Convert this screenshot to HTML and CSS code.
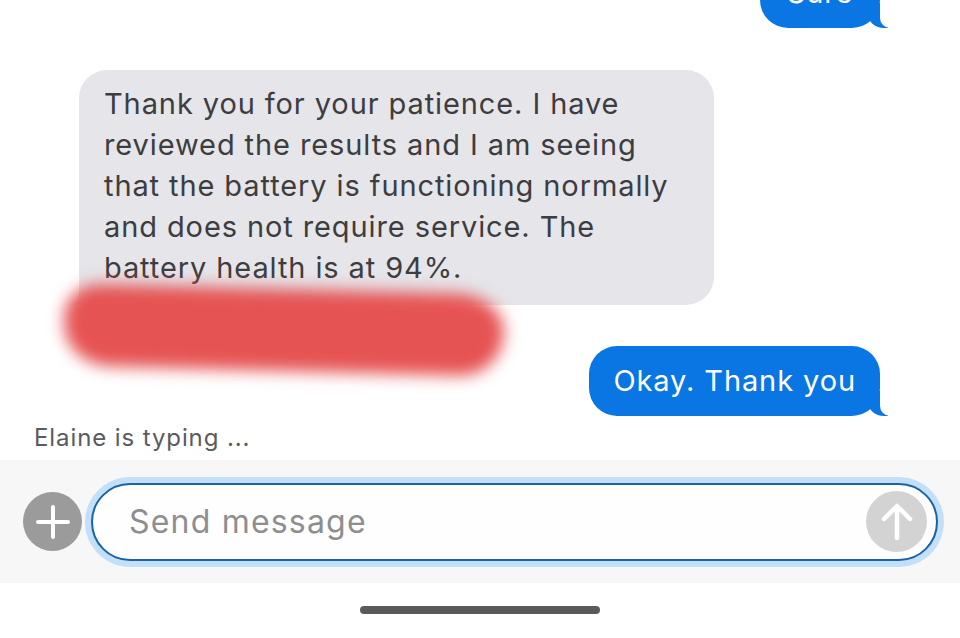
FILE: index.html
```html
<html lang="en">
<head>
<meta charset="utf-8">
<title>Messages</title>
<link rel="stylesheet" href="styles.css">
</head>
<body>
    <div class="screen">
        <div class="thread">
            <div class="row row-out first">
                <div class="bubble out">Sure</div>
            </div>
            <div class="row row-in">
                <div class="bubble in">
                    Thank you for your patience. I have reviewed the results and I am seeing that the battery is functioning normally and does not require service. The battery health is at 94%.
                </div>
                <!-- redacted name -->
                <div class="scribble"></div>
            </div>
            <div class="row row-out">
                <div class="bubble out">Okay. Thank you</div>
            </div>
            <div class="typing">Elaine is typing ...</div>
        </div>

        <div class="compose">
            <div class="plus">
                <svg width="34" height="34" viewBox="0 0 34 34">
                    <path d="M17 2 V32 M2 17 H32" stroke="#fff" stroke-width="4" stroke-linecap="round"/>
                </svg>
            </div>
            <div class="field">
                <span class="placeholder">Send message</span>
                <div class="send">
                    <svg width="36" height="40" viewBox="0 0 36 40">
                        <path d="M18 36 V5 M5 17 L18 4 L31 17" stroke="#fff" stroke-width="4.5" stroke-linecap="round" stroke-linejoin="round" fill="none"/>
                    </svg>
                </div>
            </div>
        </div>
        <div class="home-bar"></div>
    </div>
</body>
</html>
```

FILE: styles.css
```css
    /* whole page is one phone screen */
    body{
        margin: 0;
        background: #fff;
        font-family: "Inter", "Noto Sans", sans-serif;
        overflow: hidden;
    }
    .screen{
        width: 960px;
        height: 638px;
        display: flex;
        flex-direction: column;
    }
    .thread{
        display: flex;
        flex-direction: column;
    }
    .row{
        display: flex;
        position: relative;
    }
    .row-out{
        justify-content: flex-end;
        padding-right: 80px;
        margin-top: 41px;
    }
    .row-out.first{
        margin-top: -42px;
    }
    .row-in{
        padding-left: 79px;
        margin-top: 42px;
    }
    .bubble{
        position: relative;
        font-size: 29px;
        border-radius: 28px;
        letter-spacing: 0.9px;
    }
    .out{
        background: #0a76e3;
        color: #fff;
        height: 70px;
        line-height: 70px;
        padding: 0 24px;
    }
    .first .out{
        width: 72px;
        text-align: center;
    }
    /* little tails on the bubbles */
    .out::before, .out::after,
    .in::before, .in::after{
        content: "";
        position: absolute;
        bottom: 0;
        height: 25px;
    }
    .out::before{
        right: -8px;
        width: 20px;
        background: #0a76e3;
        border-bottom-left-radius: 16px 14px;
    }
    .out::after{
        right: -26px;
        width: 26px;
        background: #fff;
        border-bottom-left-radius: 10px;
    }
    .in{
        width: 586px;
        background: #e5e5ea;
        color: #3d3d40;
        line-height: 41px;
        padding: 13px 24px 17px 25px;
    }
    .in::before{
        left: -8px;
        width: 20px;
        background: #e5e5ea;
        border-bottom-right-radius: 16px 14px;
    }
    .in::after{
        left: -26px;
        width: 26px;
        background: #fff;
        border-bottom-right-radius: 10px;
    }
    .scribble{
        position: absolute;
        left: 64px;
        top: 219px;
        width: 440px;
        height: 82px;
        background: #e65353;
        border-radius: 38px 50px 46px 50px / 34px 40px 46px 44px;
        transform: rotate(1.5deg);
        filter: blur(8px);
        z-index: 2;
    }
    .typing{
        height: 44px;
        line-height: 44px;
        padding-left: 34px;
        font-size: 24px;
        letter-spacing: 0.9px;
        color: #5b5b5e;
    }
    .compose{
        background: #f7f7f7;
        height: 123px;
        display: flex;
        align-items: center;
        padding-left: 23px;
        gap: 9px;
    }
    .plus{
        width: 59px;
        height: 59px;
        border-radius: 50%;
        background: #9b9b9b;
        display: flex;
        align-items: center;
        justify-content: center;
        flex-shrink: 0;
    }
    .field{
        width: 847px;
        height: 78px;
        box-sizing: border-box;
        border: 2px solid #1a63a6;
        border-radius: 39px;
        box-shadow: 0 0 0 6px #c3e0fb;
        background: #fefefe;
        display: flex;
        align-items: center;
        padding: 0 9px 0 36px;
    }
    .placeholder{
        flex: 1;
        font-size: 32px;
        letter-spacing: 1.2px;
        color: #8e8e90;
    }
    .send{
        width: 61px;
        height: 61px;
        border-radius: 50%;
        background: #d3d3d3;
        display: flex;
        align-items: center;
        justify-content: center;
    }
    .home-bar{
        width: 240px;
        height: 8px;
        border-radius: 4px;
        background: #5a5a5a;
        margin: 23px auto 0 auto;
    }
```
